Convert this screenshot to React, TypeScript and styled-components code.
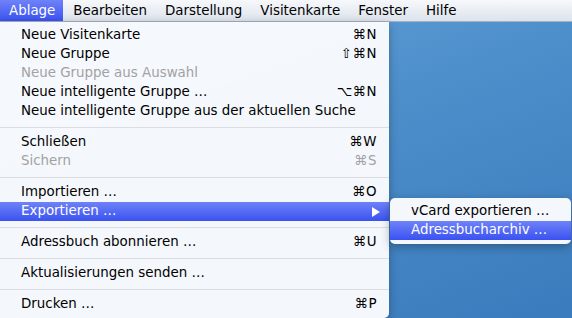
import styled, { createGlobalStyle, css } from "styled-components";

const GlobalStyle = createGlobalStyle`
  html, body {
    margin: 0;
    padding: 0;
    overflow: hidden;
  }
  body {
    font-family: "DejaVu Sans", "Liberation Sans", sans-serif;
    -webkit-font-smoothing: antialiased;
  }
`;

const Screen = styled.div`
  width: 572px;
  height: 318px;
  display: flex;
  flex-direction: column;
  background: linear-gradient(160deg, #6aa8dc 0%, #4d8fcb 45%, #3a7bbd 100%);
  overflow: hidden;
`;

const MenuBar = styled.div`
  height: 22px;
  flex: none;
  display: flex;
  align-items: stretch;
  background: linear-gradient(#f6f8fb, #dde3ec);
  border-bottom: 1px solid #a6b0be;
  box-sizing: border-box;
  font-size: 13.4px;
  color: #000;
`;

const MenuTitle = styled.div<{ $active?: boolean }>`
  display: flex;
  align-items: center;
  padding: 0 8px 0 9px;
  margin-right: 1px;
  white-space: nowrap;
  ${(p) =>
    p.$active &&
    css`
      color: #fff;
      background: linear-gradient(#6f82f8, #3a52f1);
    `}
`;

const Desktop = styled.div`
  flex: 1;
  display: flex;
  align-items: flex-start;
`;

const Menu = styled.div`
  width: 389px;
  box-sizing: border-box;
  padding: 4px 0;
  background: rgba(250, 251, 253, 0.97);
  border-bottom-right-radius: 5px;
  box-shadow: 0 3px 10px rgba(0, 0, 0, 0.3);
  font-size: 13.4px;
`;

const SubMenu = styled(Menu)`
  width: 181px;
  margin-top: 176px;
  margin-left: 1px;
  border-radius: 5px;
`;

const Row = styled.div<{ $disabled?: boolean; $selected?: boolean; $indent?: number }>`
  height: 19px;
  display: flex;
  align-items: center;
  justify-content: space-between;
  padding: 0 12px 0 ${(p) => p.$indent ?? 21}px;
  line-height: 19px;
  white-space: nowrap;
  color: ${(p) => (p.$disabled ? "#a2a2a2" : "#000")};
  ${(p) =>
    p.$selected &&
    css`
      color: #fff;
      background: linear-gradient(#6f82f8, #3a52f1);
    `}
`;

const Label = styled.span`
  position: relative;
  top: -1px;
`;

const Shortcut = styled.span`
  position: relative;
  top: -1px;
  letter-spacing: 0.5px;
`;

const Arrow = styled.span`
  width: 0;
  height: 0;
  border-top: 5px solid transparent;
  border-bottom: 5px solid transparent;
  border-left: 8px solid #fff;
  margin-right: -3px;
`;

const Separator = styled.div`
  height: 12px;
  display: flex;
  align-items: center;
  &::after {
    content: "";
    flex: 1;
    height: 1px;
    background: #dcdde0;
  }
`;

type Item =
  | { label: string; key?: string; disabled?: boolean; selected?: boolean; sub?: boolean }
  | "sep";

const items: Item[] = [
  { label: "Neue Visitenkarte", key: "⌘N" },
  { label: "Neue Gruppe", key: "⇧⌘N" },
  { label: "Neue Gruppe aus Auswahl", disabled: true },
  { label: "Neue intelligente Gruppe …", key: "⌥⌘N" },
  { label: "Neue intelligente Gruppe aus der aktuellen Suche" },
  "sep",
  { label: "Schließen", key: "⌘W" },
  { label: "Sichern", key: "⌘S", disabled: true },
  "sep",
  { label: "Importieren …", key: "⌘O" },
  { label: "Exportieren …", selected: true, sub: true },
  "sep",
  { label: "Adressbuch abonnieren …", key: "⌘U" },
  "sep",
  { label: "Aktualisierungen senden …" },
  "sep",
  { label: "Drucken …", key: "⌘P" },
];

const titles = ["Ablage", "Bearbeiten", "Darstellung", "Visitenkarte", "Fenster", "Hilfe"];

export default function App() {
  return (
    <>
      <GlobalStyle />
      <Screen>
        <MenuBar>
          {titles.map((t, i) => (
            <MenuTitle key={t} $active={i === 0}>
              {t}
            </MenuTitle>
          ))}
        </MenuBar>
        <Desktop>
          <Menu>
            {items.map((it, i) =>
              it === "sep" ? (
                <Separator key={i} />
              ) : (
                <Row key={i} $disabled={it.disabled} $selected={it.selected}>
                  <Label>{it.label}</Label>
                  {it.key && <Shortcut>{it.key}</Shortcut>}
                  {it.sub && <Arrow />}
                </Row>
              )
            )}
          </Menu>
          <SubMenu>
            <Row $indent={21}>
              <Label>vCard exportieren …</Label>
            </Row>
            <Row $indent={21} $selected>
              <Label>Adressbucharchiv …</Label>
            </Row>
          </SubMenu>
        </Desktop>
      </Screen>
    </>
  );
}
